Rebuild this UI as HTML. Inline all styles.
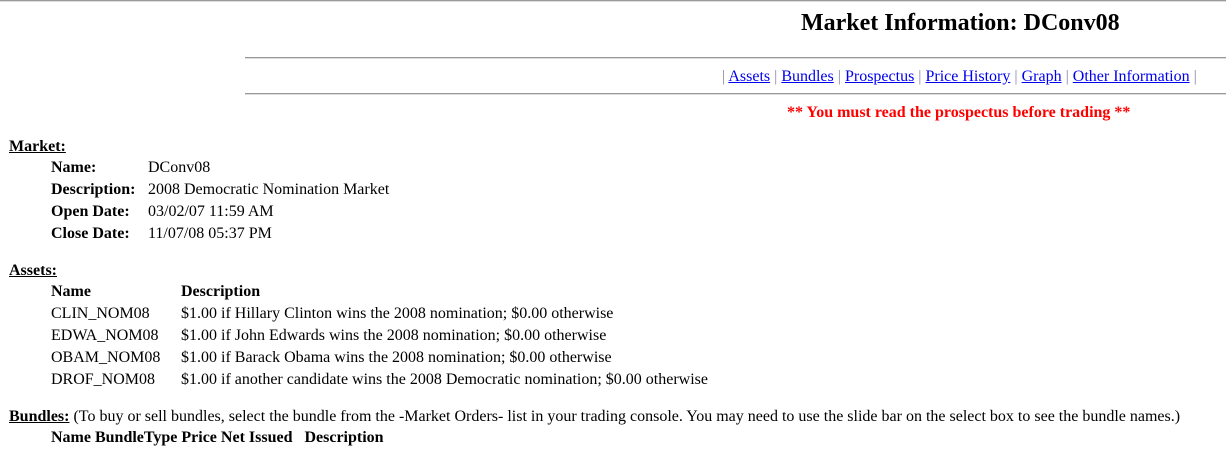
<!DOCTYPE html>
<html><head><style>
body{margin:0;width:1226px;height:457px;background:#fff;font-family:"Liberation Serif",serif;font-size:16px;color:#000;position:relative;overflow:hidden}
.a{position:absolute;white-space:nowrap;line-height:18px}
.b{font-weight:bold}
a{color:#00e}
.hr{position:absolute;height:0;border-top:1px solid #999;border-bottom:1px solid #ddd}
.s{color:#88a}
</style></head><body>
<div class="hr" style="left:0;top:0;width:1226px"></div>
<div class="a b" style="left:801px;top:10px;font-size:24px;line-height:26px">Market Information: DConv08</div>
<div class="hr" style="left:245px;top:57px;width:981px"></div>
<div class="a" style="left:722px;top:68px"><span class="s">|</span> <a href="#">Assets</a> <span class="s">|</span> <a href="#">Bundles</a> <span class="s">|</span> <a href="#">Prospectus</a> <span class="s">|</span> <a href="#">Price History</a> <span class="s">|</span> <a href="#">Graph</a> <span class="s">|</span> <a href="#">Other Information</a> <span class="s">|</span></div>
<div class="hr" style="left:245px;top:93px;width:981px"></div>
<div class="a b" style="left:787px;top:104px;color:#f00">** You must read the prospectus before trading **</div>

<div class="a b" style="left:9px;top:138px;text-decoration:underline">Market:</div>
<div class="a b" style="left:51px;top:159px">Name:</div><div class="a" style="left:148px;top:159px">DConv08</div>
<div class="a b" style="left:51px;top:181px">Description:</div><div class="a" style="left:148px;top:181px">2008 Democratic Nomination Market</div>
<div class="a b" style="left:51px;top:203px">Open Date:</div><div class="a" style="left:148px;top:203px">03/02/07 11:59 AM</div>
<div class="a b" style="left:51px;top:225px">Close Date:</div><div class="a" style="left:148px;top:225px">11/07/08 05:37 PM</div>

<div class="a b" style="left:9px;top:262px;text-decoration:underline">Assets:</div>
<div class="a b" style="left:51px;top:283px">Name</div><div class="a b" style="left:181px;top:283px">Description</div>
<div class="a" style="left:51px;top:305px">CLIN_NOM08</div><div class="a" style="left:181px;top:305px">$1.00 if Hillary Clinton wins the 2008 nomination; $0.00 otherwise</div>
<div class="a" style="left:51px;top:327px">EDWA_NOM08</div><div class="a" style="left:181px;top:327px">$1.00 if John Edwards wins the 2008 nomination; $0.00 otherwise</div>
<div class="a" style="left:51px;top:349px">OBAM_NOM08</div><div class="a" style="left:181px;top:349px">$1.00 if Barack Obama wins the 2008 nomination; $0.00 otherwise</div>
<div class="a" style="left:51px;top:371px">DROF_NOM08</div><div class="a" style="left:181px;top:371px">$1.00 if another candidate wins the 2008 Democratic nomination; $0.00 otherwise</div>

<div class="a" style="left:9px;top:408px"><b style="text-decoration:underline">Bundles:</b> (To buy or sell bundles, select the bundle from the -Market Orders- list in your trading console. You may need to use the slide bar on the select box to see the bundle names.)</div>
<div class="a b" style="left:51px;top:429px">Name BundleType Price Net Issued &nbsp;&nbsp;Description</div>
</body></html>
